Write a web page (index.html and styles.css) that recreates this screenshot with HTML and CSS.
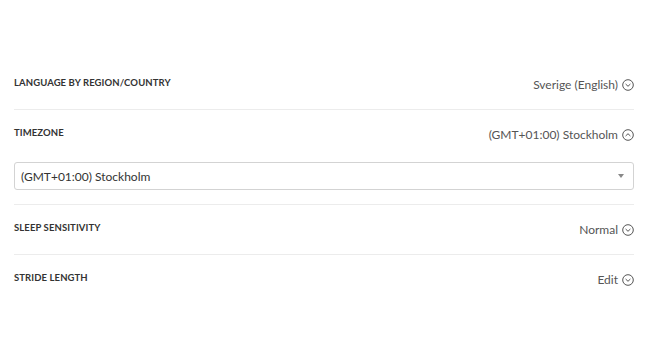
FILE: index.html
```html
<!DOCTYPE html>
<html lang="en">
<head>
    <meta charset="UTF-8">
    <meta name="viewport" content="width=device-width, initial-scale=1.0">
    <title>Settings</title>
    <link rel="stylesheet" href="styles.css">
</head>
<body>
    <div class="settings">
        <div class="row">
            <div class="row-head">
                <span class="label">Language by region/country</span>
                <span class="value">Sverige (English)
                    <svg class="chev" viewBox="0 0 12 12"><circle cx="6" cy="6" r="5.3"/><path d="M3.6 5 6 7.3 8.4 5"/></svg>
                </span>
            </div>
        </div>

        <div class="row open">
            <div class="row-head">
                <span class="label">Timezone</span>
                <span class="value">(GMT+01:00) Stockholm
                    <svg class="chev" viewBox="0 0 12 12"><circle cx="6" cy="6" r="5.3"/><path d="M3.6 7 6 4.7 8.4 7"/></svg>
                </span>
            </div>
            <div class="select">
                <span>(GMT+01:00) Stockholm</span>
                <span class="caret"></span>
            </div>
        </div>

        <div class="row">
            <div class="row-head">
                <span class="label">Sleep sensitivity</span>
                <span class="value">Normal
                    <svg class="chev" viewBox="0 0 12 12"><circle cx="6" cy="6" r="5.3"/><path d="M3.6 5 6 7.3 8.4 5"/></svg>
                </span>
            </div>
        </div>

        <div class="row last">
            <div class="row-head">
                <span class="label">Stride length</span>
                <span class="value">Edit
                    <svg class="chev" viewBox="0 0 12 12"><circle cx="6" cy="6" r="5.3"/><path d="M3.6 5 6 7.3 8.4 5"/></svg>
                </span>
            </div>
        </div>
    </div>
</body>
</html>
```

FILE: styles.css
```css
body {
    margin: 0;
    background: #fff;
    font-family: Lato, 'Open Sans', sans-serif;
    color: #555;
}

.settings {
    padding: 60px 16px 0 14px;
}

.row {
    padding: 15px 0 18px;
    border-bottom: 1px solid #ececec;
}

.row.open {
    padding-bottom: 14px;
}

.row.last {
    border-bottom: none;
}

.row-head {
    display: flex;
    justify-content: space-between;
    align-items: flex-start;
    height: 16px;
    line-height: 16px;
}

.label {
    font-size: 9.5px;
    font-weight: 700;
    text-transform: uppercase;
    color: #333;
    letter-spacing: 0.1px;
}

.value {
    margin-top: 2px;
    font-size: 12px;
    color: #555;
    display: flex;
    align-items: center;
    gap: 4px;
}

.chev {
    width: 12px;
    height: 12px;
    fill: none;
    stroke: #555;
    stroke-width: 1;
}

.select {
    margin-top: 21px;
    height: 26px;
    border: 1px solid #d3d3d3;
    border-radius: 3px;
    display: flex;
    align-items: center;
    justify-content: space-between;
    padding: 0 9px 0 6px;
    font-size: 12px;
    color: #333;
}

.caret {
    width: 0;
    height: 0;
    border-left: 3px solid transparent;
    border-right: 3px solid transparent;
    border-top: 4px solid #888;
}
```
